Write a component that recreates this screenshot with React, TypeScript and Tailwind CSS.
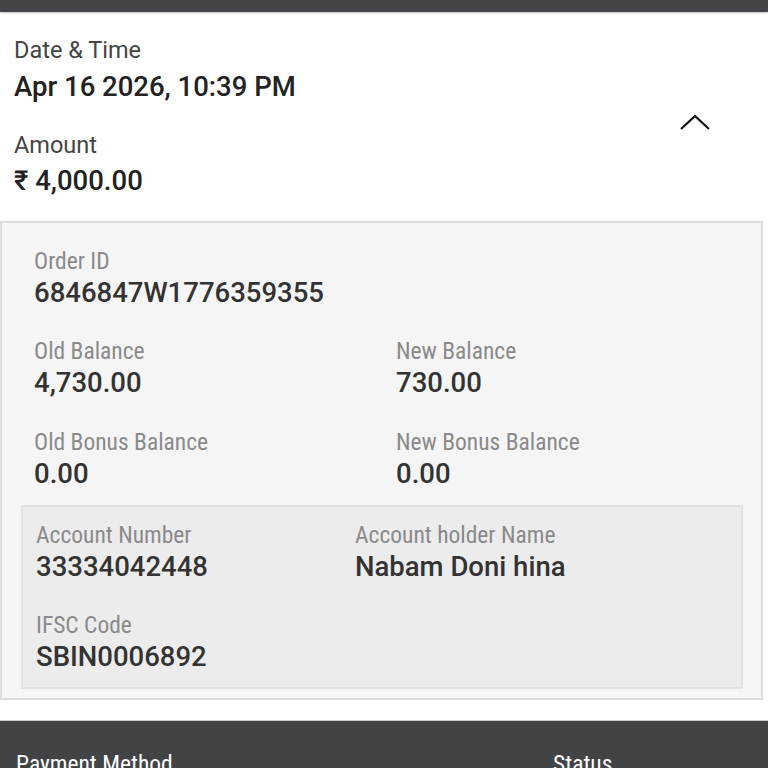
import React from "react";

const labelFont = { fontFamily: '"Roboto Condensed", "Liberation Sans Narrow", Roboto, sans-serif' };

function Field({ label, value, className = "" }: { label: string; value: string; className?: string }) {
  return (
    <div className={className}>
      <div className="text-[23.5px] leading-[30px] text-[#8a8a8a]" style={labelFont}>
        {label}
      </div>
      <div className="text-[27.5px] leading-[34px] font-medium text-[#333333] font-['Roboto',sans-serif]">{value}</div>
    </div>
  );
}

export default function App() {
  return (
    <div className="w-[768px] h-[768px] overflow-hidden bg-white font-['Roboto',sans-serif]">
      <div className="h-[12px] bg-[#444448] shadow-[0_1px_2px_rgba(0,0,0,0.25)]" />
      <div className="relative px-[14px] pt-[23px] pb-[22px]">
        <div className="text-[23.5px] leading-[30px] text-[#444444]">Date &amp; Time</div>
        <div className="mt-[4px] text-[27.5px] leading-[36px] font-medium text-[#222222]">Apr 16 2026, 10:39 PM</div>
        <div className="mt-[25px] text-[23.5px] leading-[30px] text-[#444444]">Amount</div>
        <div className="mt-[3px] text-[27.5px] leading-[36px] font-medium text-[#222222]">₹ 4,000.00</div>
        <svg className="absolute left-[680px] top-[102px]" width="30" height="16" viewBox="0 0 30 16" fill="none">
          <path d="M1 15 L15 2 L29 15" stroke="#111" strokeWidth="2.2" />
        </svg>
      </div>
      <div className="w-[763px] border-2 border-[#dddddd] bg-[#f5f5f5] pt-[23px] pb-[9px]">
        <Field className="pl-[32px]" label="Order ID" value="6846847W1776359355" />
        <div className="mt-[26px] grid grid-cols-[362px_1fr] pl-[32px]">
          <Field label="Old Balance" value="4,730.00" />
          <Field label="New Balance" value="730.00" />
        </div>
        <div className="mt-[27px] grid grid-cols-[362px_1fr] pl-[32px]">
          <Field label="Old Bonus Balance" value="0.00" />
          <Field label="New Bonus Balance" value="0.00" />
        </div>
        <div className="ml-[19px] mr-[18px] mt-[14px] border-2 border-[#e2e2e2] bg-[#ececec] pt-[13px] pb-[13px] pl-[13px]">
          <div className="grid grid-cols-[319px_1fr]">
            <Field label="Account Number" value="33334042448" />
            <Field label="Account holder Name" value="Nabam Doni hina" />
          </div>
          <Field className="mt-[26px]" label="IFSC Code" value="SBIN0006892" />
        </div>
      </div>
      <div className="mt-[20px] h-[60px] bg-[#424347] border-t border-[#cfcfcf] flex items-start pt-[28px] text-white text-[23.5px] leading-[30px]" style={labelFont}>
        <div className="pl-[16px] w-[553px]">Payment Method</div>
        <div>Status</div>
      </div>
    </div>
  );
}
